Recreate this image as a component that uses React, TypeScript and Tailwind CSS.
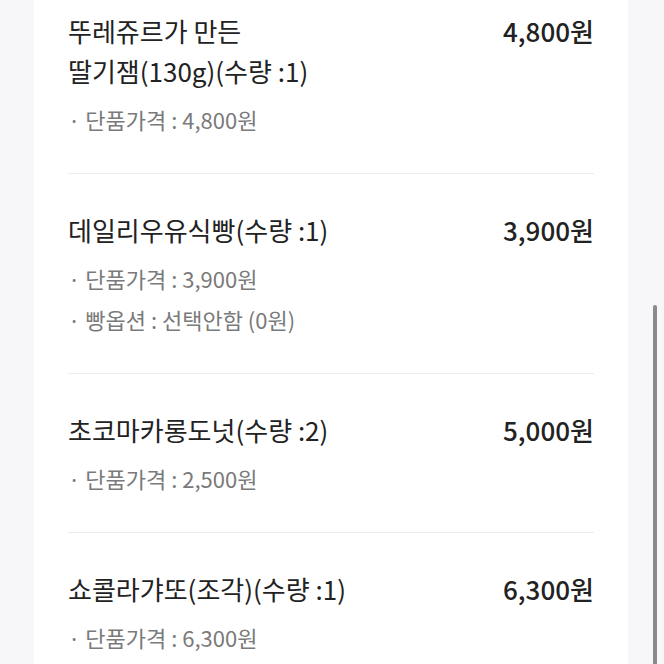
const items = [
  {
    title: ["뚜레쥬르가 만든", "딸기잼(130g)(수량 :1)"],
    price: "4,800원",
    details: ["단품가격 : 4,800원"],
  },
  {
    title: ["데일리우유식빵(수량 :1)"],
    price: "3,900원",
    details: ["단품가격 : 3,900원", "빵옵션 : 선택안함 (0원)"],
  },
  {
    title: ["초코마카롱도넛(수량 :2)"],
    price: "5,000원",
    details: ["단품가격 : 2,500원"],
  },
  {
    title: ["쇼콜라갸또(조각)(수량 :1)"],
    price: "6,300원",
    details: ["단품가격 : 6,300원"],
  },
];

const font = {
  fontFamily: '"Noto Sans CJK KR", "Noto Sans", sans-serif',
};

const App = () => {
  return (
    <div className="relative w-[664px] h-[664px] overflow-hidden bg-[#f7f7fa]" style={font}>
      <div className="ml-[34px] w-[594px] h-full overflow-hidden bg-white px-[34px]">
        <div className="-mt-[25px]">
          {items.map((item, i) => (
            <div
              key={i}
              className={`pt-[36px] pb-[33px] ${i < items.length - 1 ? "border-b border-[#ececec]" : ""}`}
            >
              <div className="flex justify-between items-start">
                <div className="text-[26px] leading-[40px] text-[#222]">
                  {item.title.map(line => (
                    <div key={line}>{line}</div>
                  ))}
                </div>
                <div className="text-[26px] leading-[40px] font-medium text-[#222]">{item.price}</div>
              </div>
              <div className="mt-[8px]">
                {item.details.map(d => (
                  <div key={d} className="text-[22px] leading-[41px] text-[#7a7a7a]">
                    · {d}
                  </div>
                ))}
              </div>
            </div>
          ))}
        </div>
      </div>
      {/* scrollbar */}
      <div className="absolute left-[653px] top-[305px] w-[4px] h-[400px] rounded-full bg-[#8a8a8a]" />
    </div>
  );
};

export default App;
